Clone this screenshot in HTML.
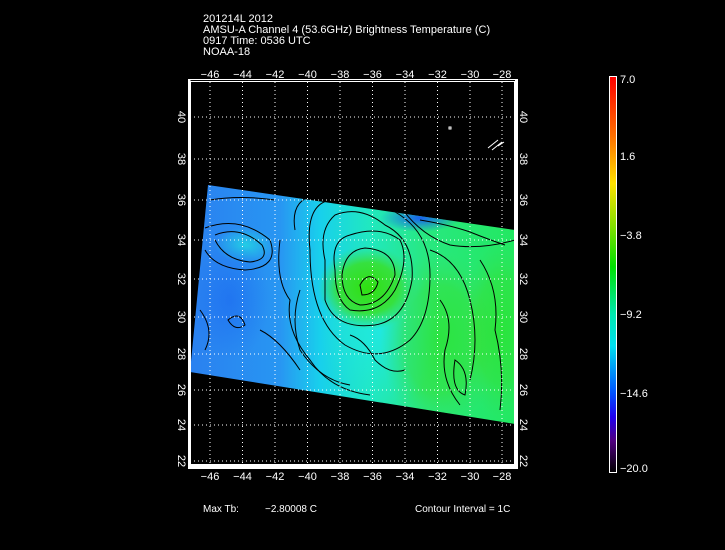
<!DOCTYPE html>
<html><head><meta charset="utf-8"><style>
html,body{margin:0;padding:0;background:#000;width:725px;height:550px;overflow:hidden}
svg{display:block}
text{font-family:"Liberation Sans",sans-serif;fill:#fff}
</style></head><body>
<svg width="725" height="550" viewBox="0 0 725 550" xmlns="http://www.w3.org/2000/svg">
<defs>
<linearGradient id="base" x1="0" y1="0" x2="1" y2="0">
<stop offset="0" stop-color="#2a80f0"/>
<stop offset="0.28" stop-color="#2896f2"/>
<stop offset="0.4" stop-color="#18d0ec"/>
<stop offset="0.55" stop-color="#20e8c0"/>
<stop offset="0.72" stop-color="#28e880"/>
<stop offset="1" stop-color="#22e860"/>
</linearGradient>
<radialGradient id="blob" cx="0.5" cy="0.5" r="0.5">
<stop offset="0" stop-color="#30e010"/>
<stop offset="0.6" stop-color="#38e030" stop-opacity="0.9"/>
<stop offset="1" stop-color="#38e060" stop-opacity="0"/>
</radialGradient>
<radialGradient id="blob2" cx="0.5" cy="0.5" r="0.5">
<stop offset="0" stop-color="#20e8e0"/>
<stop offset="1" stop-color="#20e8e0" stop-opacity="0"/>
</radialGradient>
<radialGradient id="dblue" cx="0.5" cy="0.5" r="0.5">
<stop offset="0" stop-color="#1860f0"/>
<stop offset="1" stop-color="#1860f0" stop-opacity="0"/>
</radialGradient>
<linearGradient id="cb" x1="0" y1="0" x2="0" y2="1">
<stop offset="0" stop-color="#ff0000"/>
<stop offset="0.15" stop-color="#ff7000"/>
<stop offset="0.27" stop-color="#ffe000"/>
<stop offset="0.38" stop-color="#80e000"/>
<stop offset="0.48" stop-color="#00e000"/>
<stop offset="0.6" stop-color="#00e8b0"/>
<stop offset="0.68" stop-color="#00e0f0"/>
<stop offset="0.8" stop-color="#0050ff"/>
<stop offset="0.86" stop-color="#2000f0"/>
<stop offset="0.92" stop-color="#500080"/>
<stop offset="1" stop-color="#000000"/>
</linearGradient>
<clipPath id="dc"><polygon points="208,185 515,230 515,424 190,372 190,372"/></clipPath>
</defs>

<text x="203" y="22" font-size="11">201214L 2012</text>
<text x="203" y="33" font-size="11">AMSU-A Channel 4 (53.6GHz) Brightness Temperature (C)</text>
<text x="203" y="44" font-size="11">0917 Time: 0536 UTC</text>
<text x="203" y="55" font-size="11">NOAA-18</text>

<g clip-path="url(#dc)">
<rect x="188" y="180" width="330" height="250" fill="url(#base)"/>
<ellipse cx="380" cy="330" rx="60" ry="80" fill="url(#blob2)"/>
<ellipse cx="440" cy="340" rx="60" ry="90" fill="url(#blob)" opacity="0.55"/>
<ellipse cx="500" cy="330" rx="40" ry="90" fill="url(#blob)" opacity="0.5"/>
<ellipse cx="368" cy="288" rx="50" ry="42" fill="url(#blob)"/>
<ellipse cx="245" cy="245" rx="30" ry="18" fill="url(#blob2)" opacity="0.7"/>
<ellipse cx="420" cy="218" rx="40" ry="14" fill="url(#dblue)"/>
<ellipse cx="230" cy="300" rx="40" ry="60" fill="url(#dblue)" opacity="0.5"/>
<g fill="none" stroke="#000" stroke-width="1">
<path d="M335,270 Q330,240 350,235 Q380,225 400,240 Q410,260 395,290 Q380,315 350,310 Q335,300 335,270Z"/>
<path d="M342,275 Q345,250 365,248 Q395,250 395,275 Q385,305 360,305 Q342,300 342,275Z"/>
<path d="M360,285 Q368,270 378,282 Q375,295 362,295Z"/>
<path d="M325,260 Q318,230 335,215 Q360,205 385,225 Q415,240 412,280 Q405,320 375,325 Q335,330 325,300Z"/>
<path d="M310,250 Q305,205 330,200 Q370,195 400,215 Q430,235 430,275 Q430,320 410,340 Q380,365 345,345 Q310,320 310,250"/>
<path d="M295,230 Q290,200 315,195 M300,290 Q290,320 300,350 Q320,380 350,385"/>
<path d="M280,240 Q275,280 290,300 Q285,330 310,360 Q330,390 370,395"/>
<path d="M215,235 Q240,225 262,245 Q270,260 250,262 Q225,260 215,240"/>
<path d="M205,228 Q240,215 270,240 Q280,268 245,270 Q215,268 205,250"/>
<path d="M420,220 Q450,225 470,232 Q490,240 505,245"/>
<path d="M400,206 Q420,235 450,245 Q480,250 515,240"/>
<path d="M430,250 Q460,260 470,300 Q480,340 470,380 M480,260 Q500,290 495,330 Q505,370 500,410"/>
<path d="M440,300 Q455,320 445,350 Q440,380 460,405"/>
<path d="M260,330 Q280,340 300,370 M200,310 Q215,330 205,350"/>
<path d="M455,360 Q470,370 465,395 Q450,390 455,360Z"/>
<path d="M210,200 Q240,195 275,200"/>
<path d="M228,320 Q240,310 245,325 Q235,332 228,320Z"/>
<path d="M350,335 Q365,340 375,360 Q390,375 405,370"/>
</g>
</g>

<g stroke="#fff" stroke-width="1" stroke-dasharray="1,3" fill="none">
<path d="M210,82V464M242.5,82V464M275,82V464M307.5,82V464M340,82V464M372.5,82V464M405,82V464M437.5,82V464M470,82V464M502,82V464"/>
<path d="M190,117H515M190,159H515M190,200H515M190,240H515M190,279H515M190,317H515M190,354H515M190,390H515M190,425H515M190,461H515"/>
</g>

<rect x="188.5" y="79.5" width="329" height="389" fill="none" stroke="#fff" stroke-width="1"/>
<rect x="190.5" y="81.5" width="324" height="383" fill="none" stroke="#fff" stroke-width="1"/>
<rect x="189" y="465" width="328" height="3" fill="#fff"/>
<rect x="515" y="80" width="3" height="388" fill="#fff"/>
<rect x="189" y="80" width="1.5" height="388" fill="#fff"/>

<g font-size="11" text-anchor="middle">
<text x="210" y="78">−46</text><text x="242.5" y="78">−44</text><text x="275" y="78">−42</text><text x="307.5" y="78">−40</text><text x="340" y="78">−38</text><text x="372.5" y="78">−36</text><text x="405" y="78">−34</text><text x="437.5" y="78">−32</text><text x="470" y="78">−30</text><text x="502" y="78">−28</text>
<text x="210" y="480">−46</text><text x="242.5" y="480">−44</text><text x="275" y="480">−42</text><text x="307.5" y="480">−40</text><text x="340" y="480">−38</text><text x="372.5" y="480">−36</text><text x="405" y="480">−34</text><text x="437.5" y="480">−32</text><text x="470" y="480">−30</text><text x="502" y="480">−28</text>
</g>
<g font-size="11" text-anchor="middle">
<text transform="translate(178,117) rotate(90)">40</text>
<text transform="translate(178,159) rotate(90)">38</text>
<text transform="translate(178,200) rotate(90)">36</text>
<text transform="translate(178,240) rotate(90)">34</text>
<text transform="translate(178,279) rotate(90)">32</text>
<text transform="translate(178,317) rotate(90)">30</text>
<text transform="translate(178,354) rotate(90)">28</text>
<text transform="translate(178,390) rotate(90)">26</text>
<text transform="translate(178,425) rotate(90)">24</text>
<text transform="translate(178,461) rotate(90)">22</text>
<text transform="translate(520,117) rotate(90)">40</text>
<text transform="translate(520,159) rotate(90)">38</text>
<text transform="translate(520,200) rotate(90)">36</text>
<text transform="translate(520,240) rotate(90)">34</text>
<text transform="translate(520,279) rotate(90)">32</text>
<text transform="translate(520,317) rotate(90)">30</text>
<text transform="translate(520,354) rotate(90)">28</text>
<text transform="translate(520,390) rotate(90)">26</text>
<text transform="translate(520,425) rotate(90)">24</text>
<text transform="translate(520,461) rotate(90)">22</text>
</g>

<g fill="none" stroke="#fff"><path d="M488,148l10,-8M492,150l10,-8M498,146l6,-4"/><rect x="449" y="127" width="2" height="2"/></g>

<rect x="609.5" y="76.5" width="7" height="396" fill="url(#cb)" stroke="#fff" stroke-width="1"/>
<g font-size="11">
<text x="620" y="83">7.0</text>
<text x="620" y="160">1.6</text>
<text x="620" y="239">−3.8</text>
<text x="620" y="318">−9.2</text>
<text x="620" y="397">−14.6</text>
<text x="620" y="472">−20.0</text>
</g>

<text x="203" y="512" font-size="10">Max Tb:</text>
<text x="265" y="512" font-size="10">−2.80008   C</text>
<text x="415" y="512" font-size="10">Contour Interval = 1C</text>
</svg>
</body></html>
